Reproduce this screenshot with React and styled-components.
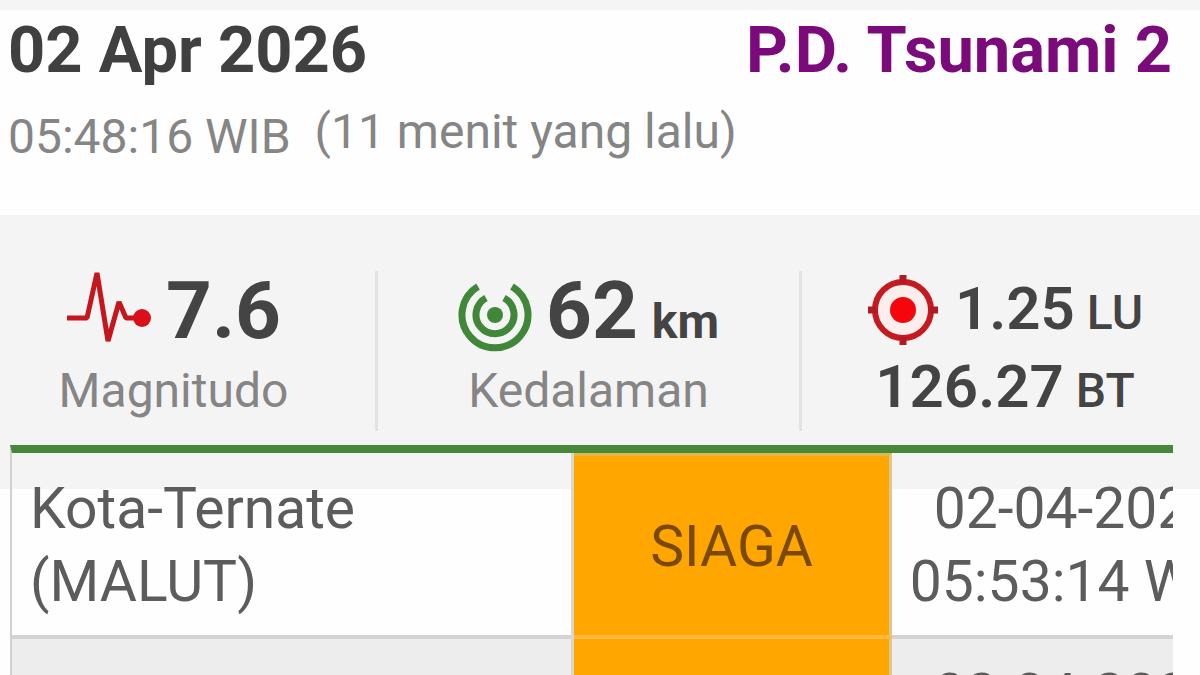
import React from 'react';
import { styled, createGlobalStyle } from 'styled-components';

const App = () => {
  const rowsMap = warnings.map((row, index) => (
    <Row key={index} $shaded={index % 2 === 1}>
      <Cell>
        {row.area}
        <br />
        {row.province}
      </Cell>
      <StatusCell>{row.status}</StatusCell>
      <TimeCell>
        {row.date}
        <br />
        {row.time}
      </TimeCell>
    </Row>
  ));

  return (
    <Page>
      <GlobalStyle />
      <Header>
        <TitleRow>
          <Title>02 Apr 2026</Title>
          <Title as='h2' $color='#7b0a7b'>
            P.D. Tsunami 2
          </Title>
        </TitleRow>
        <TimeRow>
          <Time>05:48:16 WIB</Time>
          <Ago>(11 menit yang lalu)</Ago>
        </TimeRow>
      </Header>

      <Stats>
        <Stat $divided $shift='28px'>
          <Figure>
            <PulseIcon />
            <Value>7.6</Value>
          </Figure>
          <Label>Magnitudo</Label>
        </Stat>
        <Stat $divided>
          <Figure>
            <DepthIcon />
            <Value>62</Value>
            <Unit>km</Unit>
          </Figure>
          <Label>Kedalaman</Label>
        </Stat>
        <Stat>
          <Coordinates>
            <Coordinate>
              <TargetIcon />
              <Degree>1.25</Degree>
              <Direction>LU</Direction>
            </Coordinate>
            <Coordinate>
              <Degree>126.27</Degree>
              <Direction>BT</Direction>
            </Coordinate>
          </Coordinates>
        </Stat>
      </Stats>

      <TableClip>
        <Table>
          <colgroup>
            <col />
            <StatusCol />
            <TimeCol />
          </colgroup>
          <tbody>{rowsMap}</tbody>
        </Table>
      </TableClip>
    </Page>
  );
};

export default App;

const PulseIcon = () => (
  <Icon width='86' height='76' viewBox='0 0 86 76' aria-hidden='true'>
    <path
      d='M1 47H21L31 2L42 70L53 31L60 47H76'
      fill='none'
      stroke='#c4161c'
      strokeWidth='5'
      strokeLinejoin='bevel'
    />
    <circle cx='76' cy='47' r='9' fill='#d9101a' />
  </Icon>
);

const DepthIcon = () => (
  <Icon width='74' height='82' viewBox='0 0 74 82' aria-hidden='true'>
    <g fill='none' stroke='#41873a' strokeWidth='7'>
      <path d='M20 15.500A33 33 0 1 0 54 15.500' />
      <path d='M28 27A19 19 0 1 0 46 27' />
    </g>
    <circle cx='37' cy='44' r='8' fill='#41873a' />
  </Icon>
);

const TargetIcon = () => (
  <Icon width='76' height='76' viewBox='0 0 76 76' aria-hidden='true'>
    <circle cx='36' cy='39' r='28' fill='#fdeeee' stroke='#c41a20' strokeWidth='6' />
    <circle cx='36' cy='39' r='13' fill='#f5060c' />
    <path
      d='M36 4V12M36 66V74M1 39H9M63 39H71'
      stroke='#b01a20'
      strokeWidth='7'
    />
  </Icon>
);

const GlobalStyle = createGlobalStyle`
  * {
    box-sizing: border-box;
  }

  body {
    margin: 0;
    background: #fefefe;
    color: #444444;
    font-family: Roboto, 'Liberation Sans', sans-serif;
  }
`;

const Page = styled.main`
  height: 100vh;
  overflow: hidden;
  border-top: 10px solid #f5f5f5;
`;

const Header = styled.header`
  padding: 2px 28px 50px 8px;
`;

const TitleRow = styled.div`
  display: flex;
  justify-content: space-between;
`;

const Title = styled.h1`
  margin: 0;
  font-size: 65px;
  font-weight: 700;
  line-height: 76px;
  color: ${(props) => props.$color || '#404040'};
`;

const TimeRow = styled.div`
  display: flex;
  gap: 24px;
  padding-top: 14px;
  color: #858585;
  font-size: 48px;
  line-height: 56px;
`;

const Time = styled.time`
  padding-top: 7px;
`;

const Ago = styled.span`
  padding-top: 2px;
`;

const Stats = styled.section`
  display: grid;
  grid-template-columns: 378fr 424fr 398fr;
  padding: 56px 0 58px;
  background: #f4f4f4;
`;

const Stat = styled.div`
  display: flex;
  flex-direction: column;
  align-items: center;
  height: 160px;
  padding-right: ${(props) => props.$shift || '0px'};
  border-right: ${(props) => (props.$divided ? '3px solid #e2e2e2' : 'none')};
`;

const Figure = styled.div`
  display: flex;
  align-items: baseline;
  gap: 14px;
  height: 92px;
  line-height: 80px;
`;

const Icon = styled.svg`
  flex: none;
  align-self: flex-start;
`;

const Value = styled.strong`
  font-size: 80px;
  font-weight: 700;
`;

const Unit = styled.span`
  font-size: 48px;
  font-weight: 700;
`;

const Label = styled.span`
  color: #858585;
  font-size: 48px;
  line-height: 56px;
`;

const Coordinates = styled.div`
  display: flex;
  flex-direction: column;
  align-items: center;
  gap: 2px;
  padding-left: 8px;
`;

const Coordinate = styled.div`
  display: flex;
  align-items: baseline;
  gap: 12px;
  height: 76px;
  line-height: 76px;
`;

const Degree = styled.strong`
  font-size: 60px;
  font-weight: 600;
`;

const Direction = styled.span`
  font-size: 48px;
  font-weight: 500;
`;

const TableClip = styled.div`
  margin: -44px 27px 0 10px;
  overflow: hidden;
`;

const Table = styled.table`
  width: 108%;
  table-layout: fixed;
  border-collapse: separate;
  border-spacing: 0;
  border-top: 8px solid #46873a;
  border-left: 2px solid #d0d0d0;
  color: #5c5c5c;
  font-size: 57px;
  line-height: 73px;
`;

const StatusCol = styled.col`
  width: 318px;
`;

const TimeCol = styled.col`
  width: 374px;
`;

const Row = styled.tr`
  background: ${(props) => (props.$shaded ? '#ededed' : 'transparent')};
`;

const Cell = styled.td`
  padding: 19px 18px 17px;
  border-right: 3px solid #d8d8d0;
  border-bottom: 4px solid #d4d4d4;
`;

const StatusCell = styled(Cell)`
  background: #ffa600;
  border-right-color: #dcc88c;
  border-bottom-color: #ffb840;
  color: #7a4a05;
  text-align: center;

  tr:first-child > & {
    border-top: 3px solid #dcb850;
  }
`;

const TimeCell = styled(Cell)`
  padding-left: 10px;
  padding-right: 10px;
  text-align: center;
  white-space: nowrap;
`;

const warnings = [
  {
    area: 'Kota-Ternate',
    province: '(MALUT)',
    status: 'SIAGA',
    date: '02-04-2026',
    time: '05:53:14 WIB',
  },
  {
    date: '02-04-2026',
  },
];
